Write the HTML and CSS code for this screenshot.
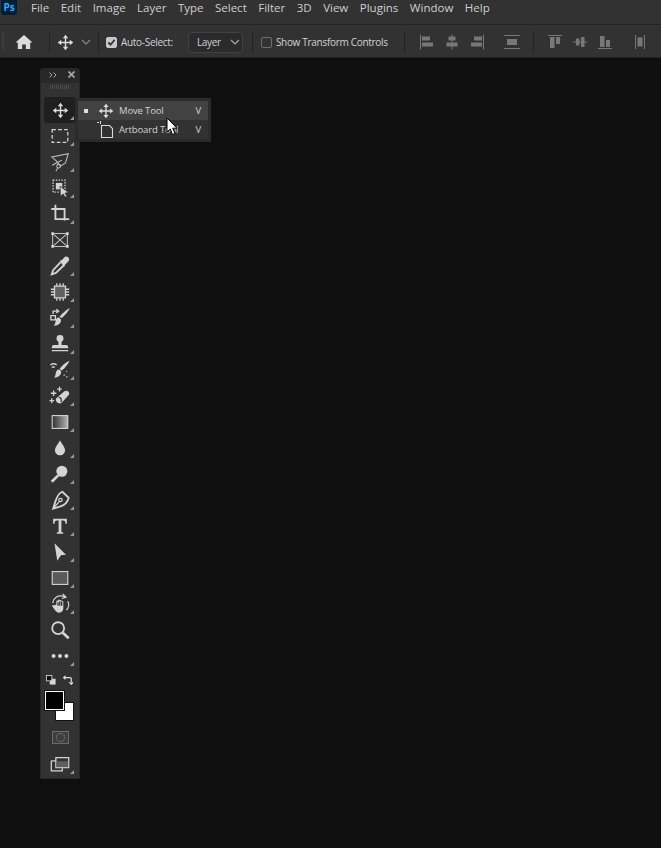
FILE: index.html
```html
<!DOCTYPE html>
<html lang="en">
<head>
  <meta charset="UTF-8">
  <meta name="viewport" content="width=device-width, initial-scale=1.0">
  <title>Photoshop</title>
  <link rel="stylesheet" href="styles.css">
</head>
<body>
  <header class="menubar">
    <div class="ps-logo">Ps</div>
    <nav class="menu">
      <span>File</span><span>Edit</span><span>Image</span><span>Layer</span><span>Type</span><span>Select</span><span>Filter</span><span>3D</span><span>View</span><span>Plugins</span><span>Window</span><span>Help</span>
    </nav>
  </header>

  <div class="optionsbar">
    <div class="grip"></div>
    <svg class="home" width="20" height="20" viewBox="0 0 20 20"><path d="M10 3 18.500 10.500h-2.300V17h-4.400v-4.500H8.200V17H3.800v-6.500H1.500z" fill="#dcdcdc"/></svg>
    <div class="sep sep-home"></div>
    <svg class="opt-move" width="17" height="17" viewBox="0 0 24 24"><use href="#i-move"/></svg>
    <svg class="chev chev-move" width="10" height="6" viewBox="0 0 10 6"><path d="M1 1l4 4 4-4" fill="none" stroke="#8a8a8a" stroke-width="1.200"/></svg>
    <div class="sep sep-move"></div>
    <span class="check checked"><svg width="9" height="9" viewBox="0 0 10 10"><path d="M1.500 5l2.500 2.500L8.500 2" fill="none" stroke="#333" stroke-width="2"/></svg></span>
    <span class="opt-label">Auto-Select:</span>
    <div class="select"><span>Layer</span><svg class="chev" width="10" height="6" viewBox="0 0 10 6"><path d="M1 1l4 4 4-4" fill="none" stroke="#a8a8a8" stroke-width="1.200"/></svg></div>
    <div class="sep sep-select"></div>
    <span class="check"></span>
    <span class="opt-label">Show Transform Controls</span>
    <div class="sep sep-label"></div>
    <div class="aligns">
      <svg viewBox="0 0 20 20" width="20" height="20"><path d="M3.500 2.500v15" class="ln"/><path d="M5 4.500h8v4H5zM5 10.500h11v4H5z"/></svg>
      <svg viewBox="0 0 20 20" width="20" height="20"><path d="M10 2.500v15" class="ln"/><path d="M6.500 4.500h7v4h-7zM4.500 10.500h11v4h-11z"/></svg>
      <svg viewBox="0 0 20 20" width="20" height="20"><path d="M16.500 2.500v15" class="ln"/><path d="M7 4.500h8v4H7zM4 10.500h11v4H4z"/></svg>
      <svg class="gap" viewBox="0 0 20 20" width="20" height="20"><path d="M2 3.500h16M2 16.500h16" class="ln"/><path d="M5 7h10v6H5z"/></svg>
      <div class="sep sep-align"></div>
      <svg viewBox="0 0 20 20" width="20" height="20"><path d="M3 3.500h14" class="ln"/><path d="M5 5h4.500v11H5zM11 5h4v7h-4z"/></svg>
      <svg viewBox="0 0 20 20" width="20" height="20"><path d="M3 10h14" class="ln"/><path d="M6 6.500h3.500v7H6zM11 5h3.500v10H11z"/></svg>
      <svg viewBox="0 0 20 20" width="20" height="20"><path d="M3 16.500h14" class="ln"/><path d="M5 4h4.500v11H5zM11 8h4v7h-4z"/></svg>
      <svg class="gap" viewBox="0 0 20 20" width="20" height="20"><path d="M5.500 3v14M14.500 3v14" class="ln"/><path d="M7.500 5.500h5v9h-5z"/></svg>
    </div>
  </div>

  <main class="canvas">
    <aside class="toolbar">
      <div class="tb-head">
        <svg width="8" height="6" viewBox="0 0 8 6"><path d="M.5.500 3 3 .5 5.500M4.500.500 7 3 4.500 5.500" fill="none" stroke="#a5a5a5"/></svg>
        <svg width="7" height="7" viewBox="0 0 7 7"><path d="M.5.500l6 6M6.500.500l-6 6" stroke="#a5a5a5" stroke-width="1.800"/></svg>
      </div>
      <div class="tb-grip"></div>

      <div class="tool more active"><svg class="tool-move" viewBox="0 0 24 24"><use href="#i-move"/></svg></div>
      <!-- marquee -->
      <div class="tool more"><svg viewBox="0 0 24 24"><path d="M3.500 5h17v14h-17z" class="s" stroke-dasharray="4 2.500"/></svg></div>
      <!-- lasso -->
      <div class="tool more"><svg viewBox="0 0 24 24"><path d="M3 6.500 21 3l-3 10-5.500 3.500C10 13 7 9.500 3 6.500zM3.500 15.500 14 10" class="s thin"/><circle cx="10.500" cy="16.500" r="2" class="s thin"/><path d="M9.500 18.500 7.500 22" class="s thin"/></svg></div>
      <!-- object selection -->
      <div class="tool more"><svg viewBox="0 0 24 24"><path d="M4.500 3.500h13v13h-13z" class="s" stroke-dasharray="1.500 1.500"/><path d="M7.500 6.500h7v7h-7z" class="f"/><path d="M12 10l9.500 7-4 .5 2 3.500-2 1-2-3.500-3 2.500z" class="f edge"/></svg></div>
      <!-- crop -->
      <div class="tool more"><svg viewBox="0 0 24 24"><path d="M2.500 6.500H17V19M7 2v15.500h15" class="s thick"/></svg></div>
      <!-- frame -->
      <div class="tool"><svg viewBox="0 0 24 24"><path d="M4 5h16v14H4zM4 5l16 14M20 5 4 19" class="s thin"/><path d="M2.500 3.500h3v3h-3zM18.500 3.500h3v3h-3zM2.500 17.500h3v3h-3zM18.500 17.500h3v3h-3z" class="f"/></svg></div>
      <!-- eyedropper -->
      <div class="tool more"><svg viewBox="0 0 24 24"><path d="M12.500 8 4.500 16.500l-1.500 4.500 4.500-1.500L16 11.500" class="s thick"/><path d="M11.500 6.500l2.500-1 3.500-3.500c1.500-.8 3.500.2 4.200 1.500.5 1.200.3 2.500-.7 3.500L17.500 10.500l-1 2.500z" class="f"/></svg></div>
      <!-- healing/content patch -->
      <div class="tool more"><svg viewBox="0 0 24 24"><path d="M6 5.500h12v13H6z" class="f dim"/><path d="M6 5.500h12v13H6zM8.500 2.500v3M12 2.500v3M15.500 2.500v3M8.500 18.500v3M12 18.500v3M15.500 18.500v3M2 9h4M2 12h4M2 15h4M18 9h4M18 12h4M18 15h4" class="s"/></svg></div>
      <!-- brush -->
      <div class="tool more"><svg viewBox="0 0 24 24"><path d="M2 9.500h5V14H2z" class="s"/><path d="M4.500 7.500V4.500h5M8 2.500l2.500 2L8 6.500" class="s"/><path d="M23 1c-2.500 4-5.500 8-9 11l-2.500-1.500C15 6.500 18.500 3 23 1zM10 11.500c2 0 3.500 2 3 4-.8 3-3.500 5-8 5 1.800-1.500 1.800-3.500 2.300-5.500.3-1.800 1.400-3.500 2.700-3.500z" class="f"/></svg></div>
      <!-- stamp -->
      <div class="tool more"><svg viewBox="0 0 24 24"><circle cx="12" cy="6" r="3.800" class="f"/><path d="M10.300 9h3.400v4h5c1.500 0 2.300 1 2.300 3.500H3c0-2.500.8-3.500 2.300-3.500h5zM3 18.500h18V20H3z" class="f"/></svg></div>
      <!-- history brush -->
      <div class="tool more"><svg viewBox="0 0 24 24"><path d="M22.500 2c-2 4-5 8-8.500 10.500l-2.500-1.500C14 7.500 18 4 22.500 2zM10.500 11.500c2 .2 3.200 2 2.700 3.500-.6 3-3.200 5-7.700 5.500 1.500-1.500 1.500-3.500 2-5.500.4-1.800 1.500-3.500 3-3.500z" class="f"/><path d="M1.500 6.500c2-1.500 5-1.500 7 0M3 9l3.500-.5M16 18l1-1M19 14l.5-1M19 20l1-1" class="s"/></svg></div>
      <!-- eraser -->
      <div class="tool more"><svg viewBox="0 0 24 24"><path d="M8 14.500 16.500 7c1.500-1.200 3.800-.8 4.800.3 1.100 1.200 1 3-.2 4.200L14 19c-1.500 1.300-3.500 1.500-5 .2-1.400-1.200-2.200-3.500-1-4.700z" class="f"/><path d="M10.500 13.500c2-.5 4 2.500 2.500 5" class="s dark"/><path d="M5 6v6M2 9h6M11.500 2v5M9 4.500h5M3 14.500v5M.5 17h5" class="s"/></svg></div>
      <!-- gradient -->
      <div class="tool more"><svg viewBox="0 0 24 24"><defs><linearGradient id="gr"><stop offset="0" stop-color="#2e2e2e"/><stop offset="1" stop-color="#b5b5b5"/></linearGradient></defs><rect x="3.500" y="5" width="17" height="14" fill="url(#gr)" stroke="#d4d4d4" stroke-width="1.200"/></svg></div>
      <!-- blur -->
      <div class="tool more"><svg viewBox="0 0 24 24"><path d="M12 3.500c1.500 4 5.500 7 5.500 11 0 3.200-2.400 5.500-5.500 5.500s-5.500-2.300-5.500-5.500c0-4 4-7 5.500-11z" class="f"/></svg></div>
      <!-- dodge -->
      <div class="tool more"><svg viewBox="0 0 24 24"><circle cx="14" cy="9" r="6" class="f"/><path d="M10 13.500 3 20.500" class="s wide"/></svg></div>
      <!-- pen -->
      <div class="tool more"><svg viewBox="0 0 24 24"><path d="M14.500 3 21.500 9.500c-1.200 5-4.500 8-9 9.500l-8 2.500 2.500-8c1.500-4.500 4.500-9.500 7.500-10.500z" class="s thick"/><path d="M5 20.500l6-6.500" class="s"/><circle cx="12.500" cy="12" r="1.800" class="s"/></svg></div>
      <!-- type -->
      <div class="tool more"><svg viewBox="0 0 24 24"><path d="M4.500 4h15v5.500H18c-.2-2.500-.6-3.500-2.500-3.500h-2v12c0 .8.500 1 2 1v1.500h-7V19c1.500 0 2-.2 2-1V6h-2C6.600 6 6.200 7 6 9.500H4.500z" class="f"/></svg></div>
      <!-- path select -->
      <div class="tool more"><svg viewBox="0 0 24 24"><path d="M6 2.500 18.500 15l-5.500.5L9 21.500z" class="f"/></svg></div>
      <!-- rectangle -->
      <div class="tool more"><svg viewBox="0 0 24 24"><rect x="3.500" y="5" width="17" height="14" fill="#5a5a5a" stroke="#d4d4d4" stroke-width="1.200"/></svg></div>
      <!-- hand -->
      <div class="tool more"><svg viewBox="0 0 24 24"><path d="M4 11C5 5 10 2 15.500 3.500l2.500 1.500M15 1l3.500 3.500-4.500 1.500M20.500 9c1.800 3.500.5 7.500-1.500 9.500" class="s"/><path d="M8 12.500V9c0-1.200 1.800-1.200 1.800 0v-1c0-1.200 2-1.200 2 0v.5c0-1.200 2-1.200 2 0v1c0-1 1.800-1 1.800 0V17c0 2.500-2 4.500-4.500 4.500S7.500 20 6 18l-2.500-3.500c-.5-1.200 1-2 1.800-1z" class="f"/><path d="M9.800 10v4M11.800 9v5M13.800 9.500V14" class="s dark"/></svg></div>
      <!-- zoom -->
      <div class="tool"><svg viewBox="0 0 24 24"><circle cx="10" cy="10" r="6.500" class="s thick"/><path d="m15 15 6.500 6" class="s wide"/></svg></div>
      <!-- more -->
      <div class="tool more"><svg viewBox="0 0 24 24"><circle cx="5" cy="12" r="2.200" class="f"/><circle cx="12" cy="12" r="2.200" class="f"/><circle cx="19" cy="12" r="2.200" class="f"/></svg></div>

      <div class="swap-row">
        <svg width="10" height="10" viewBox="0 0 12 12"><rect x="4.500" y="4.500" width="7" height="7" fill="#d8d8d8"/><rect x=".5" y=".5" width="6.500" height="6.500" fill="#111" stroke="#d8d8d8"/></svg>
        <svg width="10" height="11" viewBox="0 0 12 13"><path d="M3 1 .8 3 3 5M1 3h7.500c1 0 1.500.500 1.500 1.500V9M7.500 8.500 10 11l2-2.500" fill="none" stroke="#d8d8d8" stroke-width="1.500"/></svg>
      </div>
      <div class="swatches">
        <div class="swatch bg"></div>
        <div class="swatch fg"></div>
      </div>
      <div class="mask"><span></span></div>
      <div class="tool more screen"><svg viewBox="0 0 24 24"><path d="M2.500 8.500h5M2.500 8.500v11h12v-3" class="s"/><path d="M7.500 5h14v11h-14z" class="s"/><path d="M8 9h13v6.500H8z" class="f dim"/></svg></div>
    </aside>

    <div class="flyout">
      <div class="fly-item on">
        <span class="dot"></span>
        <svg width="16" height="16" viewBox="0 0 24 24"><use href="#i-move"/></svg>
        <span class="fly-name">Move Tool</span>
        <span class="fly-key">V</span>
      </div>
      <div class="fly-item">
        <span class="dot none"></span>
        <svg class="artboard" width="18" height="18" viewBox="0 0 18 18"><path d="M0 1.500h2M3.500 0v3M4.500 4.500h8l3 3v9h-11z" fill="none" stroke="#d8d8d8" stroke-width="1.100"/></svg>
        <span class="fly-name">Artboard Tool</span>
        <span class="fly-key">V</span>
      </div>
    </div>

    <svg class="cursor" width="14" height="20" viewBox="0 0 14 20"><path d="M1 1v14l3.300-3 2.200 5.500 2.500-1-2.300-5.300H11z" fill="#fff" stroke="#000"/></svg>
  </main>

  <svg class="defs" width="0" height="0">
    <symbol id="i-move" viewBox="0 0 24 24">
      <path d="M12 1 15.800 6H13v5h5V8.200L23 12l-5 3.800V13h-5v5h2.800L12 23l-3.800-5H11v-5H6v2.800L1 12l5-3.800V11h5V6H8.200z" fill="#dcdcdc"/>
    </symbol>
  </svg>
</body>
</html>
```

FILE: styles.css
```css
* {
  box-sizing: border-box;
}

html, body {
  height: 100%;
}

body {
  margin: 0;
  background-color: #0f0f0f;
  font-family: "Open Sans", "Noto Sans", sans-serif;
  font-size: 11px;
  color: #d2d2d2;
  display: flex;
  flex-direction: column;
  overflow: hidden;
}

.defs {
  position: absolute;
}

/* menu bar */
.menubar {
  height: 25px;
  flex: none;
  display: flex;
  align-items: flex-start;
  background-color: #323232;
  border-bottom: 1px solid #232323;
}

.ps-logo {
  width: 16px;
  height: 15px;
  margin: 0 0 0 1px;
  background-color: #001e36;
  border-radius: 0 0 3px 3px;
  color: #31a8ff;
  font-size: 10px;
  font-weight: 700;
  line-height: 15px;
  text-align: center;
}

.menu {
  display: flex;
  gap: 11.5px;
  margin-left: 14px;
  font-size: 11.5px;
  line-height: 16px;
  color: #cfcfcf;
}

/* options bar */
.optionsbar {
  height: 33px;
  flex: none;
  display: flex;
  align-items: center;
  padding-top: 2px;
  background-color: #323232;
  border-bottom: 1px solid #202020;
}

.grip {
  width: 2px;
  height: 18px;
  margin-left: 2px;
  background-image: linear-gradient(#4a4a4a 50%, transparent 50%);
  background-size: 2px 2px;
}

.home {
  margin-left: 10px;
}

.sep {
  width: 1px;
  height: 22px;
  background-color: #222;
  flex: none;
}

.sep-home {
  margin-left: 15px;
}

.opt-move {
  margin-left: 7px;
}

.chev-move {
  margin-left: 7px;
}

.sep-move {
  margin-left: 7px;
}

.check {
  width: 11px;
  height: 11px;
  margin-left: 7px;
  border: 1px solid #6e6e6e;
  border-radius: 2px;
  display: flex;
  align-items: center;
  justify-content: center;
  flex: none;
}

.check.checked {
  background-color: #c8c8c8;
  border-color: #c8c8c8;
}

.opt-label {
  margin-left: 4px;
  font-size: 10px;
  letter-spacing: -.3px;
  white-space: nowrap;
}

.select {
  width: 55px;
  height: 21px;
  margin-left: 15px;
  padding: 0 2px 0 8px;
  display: flex;
  align-items: center;
  justify-content: space-between;
  background-color: #2b2b2b;
  border: 1px solid #424242;
  border-radius: 4px;
  font-size: 10px;
  letter-spacing: -.3px;
}

.sep-select {
  margin: 0 1px 0 9px;
}

.sep-label {
  margin-left: 16px;
}

.aligns {
  display: flex;
  align-items: center;
  gap: 5px;
  margin-left: 12px;
}

.aligns svg {
  fill: #787878;
  flex: none;
}

.aligns .ln {
  fill: none;
  stroke: #787878;
}

.aligns .gap {
  margin-left: 10px;
}

.sep-align {
  margin: 0 6px;
}

/* canvas + tool panel */
.canvas {
  flex: 1;
  position: relative;
  padding: 10px 0 0 40px;
}

.toolbar {
  width: 40px;
  height: 711px;
  background-color: #323232;
  border: 1px solid #262626;
  border-radius: 3px 3px 0 0;
  display: flex;
  flex-direction: column;
  align-items: center;
}

.tb-head {
  width: 100%;
  height: 14px;
  padding: 0 4px 3px 8px;
  display: flex;
  align-items: center;
  justify-content: space-between;
  background-color: #282828;
}

.tb-grip {
  width: 20px;
  height: 4px;
  margin: 2px 0 8px;
  background-image: linear-gradient(90deg, #4c4c4c 50%, transparent 50%);
  background-size: 2px 4px;
}

.tool {
  width: 32px;
  height: 26px;
  flex: none;
  position: relative;
  display: flex;
  align-items: center;
  justify-content: center;
}

.tool svg {
  width: 22px;
  height: 22px;
}

.tool svg.tool-move {
  width: 17px;
  height: 17px;
}

.tool.active {
  background-color: #1f1f1f;
  border-radius: 3px;
}

.tool.more::after {
  content: "";
  position: absolute;
  right: 2px;
  bottom: 3px;
  border-style: solid;
  border-width: 0 0 4px 4px;
  border-color: transparent transparent #9a9a9a transparent;
}

.s {
  fill: none;
  stroke: #d4d4d4;
  stroke-width: 1.400;
}

.f {
  fill: #d4d4d4;
}

.f.dim {
  fill: #606060;
}

.f.edge {
  stroke: #323232;
  stroke-width: .8;
}

.s.thin {
  stroke-width: 1.100;
  stroke: #c4c4c4;
}

.s.thick {
  stroke-width: 2;
}

.s.wide {
  stroke-width: 3;
}

.s.dark {
  stroke: #323232;
}

.swap-row {
  width: 27px;
  margin: 6px 1px 0 0;
  display: flex;
  justify-content: space-between;
}

.swatches {
  width: 29px;
  height: 30px;
  margin: 5px 1px 0 0;
  position: relative;
}

.swatch {
  position: absolute;
  width: 19px;
  height: 19px;
  border: 1px solid #111;
  outline: 1px solid transparent;
}

.swatch.bg {
  right: 0;
  bottom: 0;
  background-color: #fff;
}

.swatch.fg {
  left: 0;
  top: 0;
  background-color: #000;
  border-color: #fff;
  outline-color: #111;
}

.mask {
  width: 17px;
  height: 13px;
  margin-top: 10px;
  border: 1px solid #6a6a6a;
  background-color: #3e3e3e;
  display: flex;
  align-items: center;
  justify-content: center;
}

.mask span {
  width: 9px;
  height: 9px;
  border: 1px dotted #8a8a8a;
  border-radius: 50%;
}

.tool.screen {
  margin-top: 7px;
}

/* flyout */
.flyout {
  position: absolute;
  left: 75px;
  top: 40px;
  width: 136px;
  height: 44px;
  padding: 3px;
  background-color: #2b2b2b;
}

.fly-item {
  height: 19px;
  display: flex;
  align-items: center;
  padding-left: 6px;
  background-color: #323232;
  font-size: 9.500px;
  letter-spacing: -.15px;
}

.fly-item.on {
  background-color: #424242;
}

.dot {
  width: 4px;
  height: 4px;
  flex: none;
  background-color: #e0e0e0;
}

.dot.none {
  background: none;
}

.fly-item svg {
  margin-left: 10px;
  flex: none;
}

.fly-item .artboard {
  margin-left: 9px;
}

.fly-name {
  margin-left: 5px;
  flex: 1;
  white-space: nowrap;
}

.artboard + .fly-name {
  margin-left: 4px;
}

.fly-key {
  margin-right: 7px;
}

.cursor {
  position: absolute;
  left: 166px;
  top: 59px;
}
```
